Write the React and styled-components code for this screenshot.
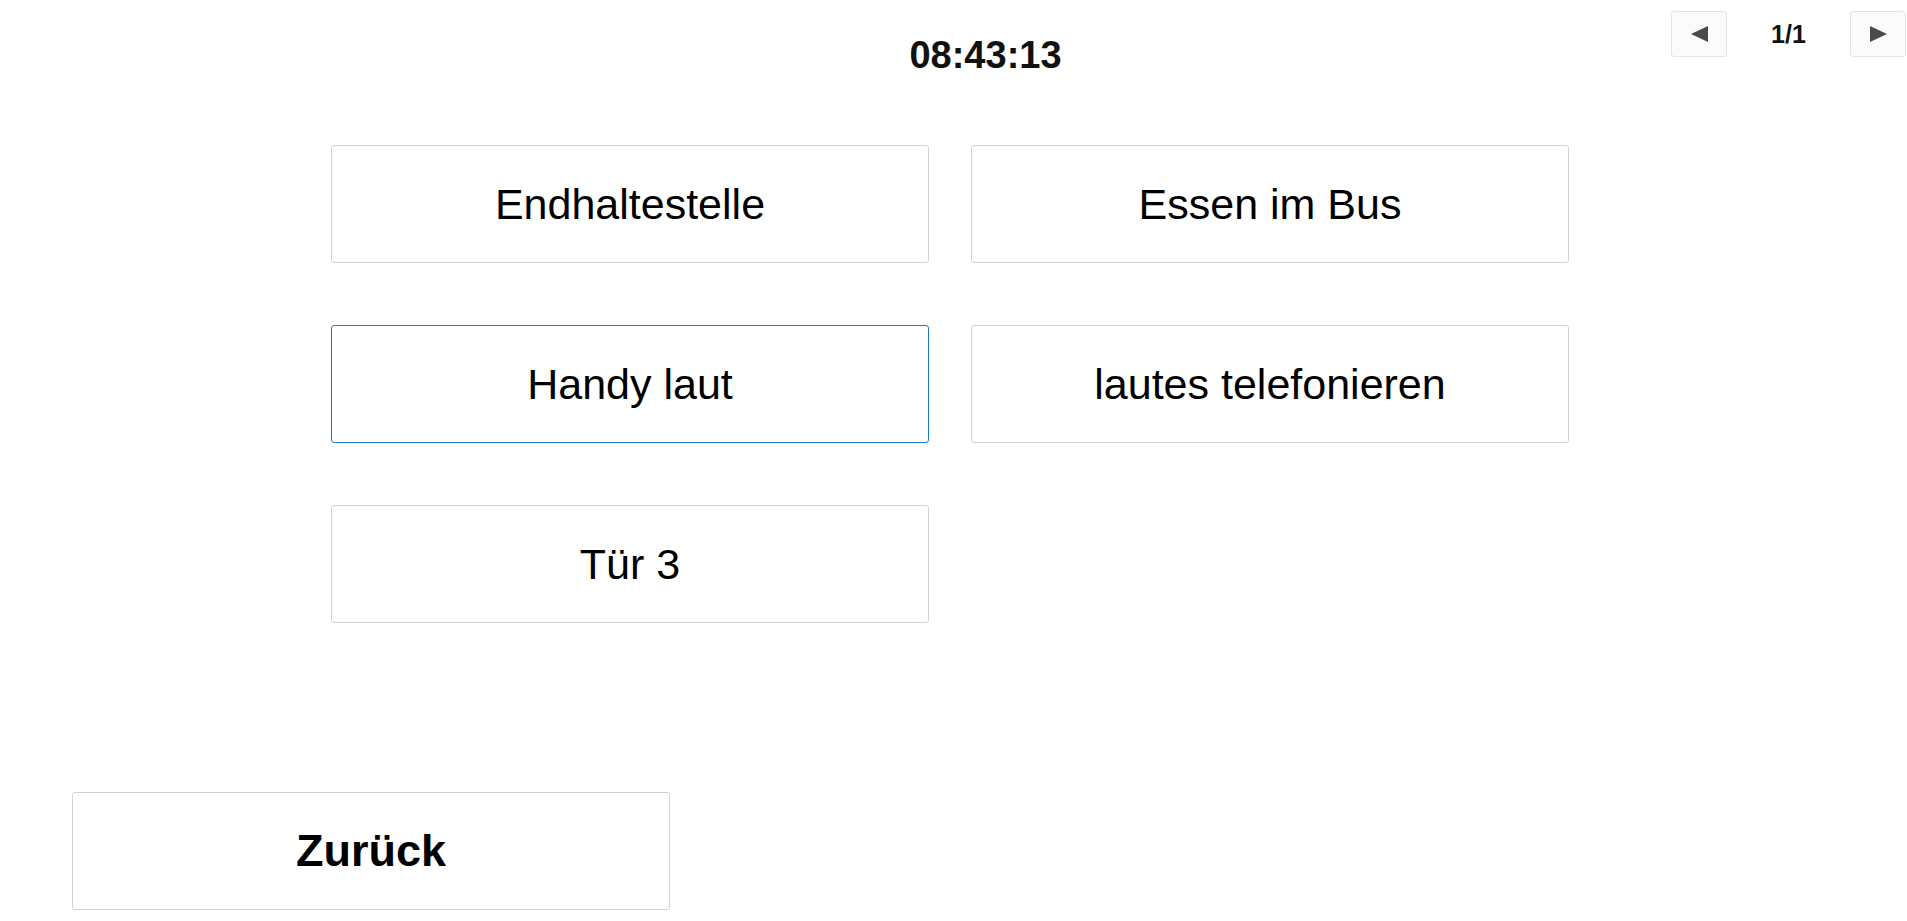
import React from "react";
import styled, { createGlobalStyle } from "styled-components";

const items = [
  { label: "Endhaltestelle" },
  { label: "Essen im Bus" },
  { label: "Handy laut", active: true },
  { label: "lautes telefonieren" },
  { label: "Tür 3" },
];

export default function App() {
  return (
    <Page>
      <GlobalStyle />
      <Header>
        <span />
        <Clock>08:43:13</Clock>
        <Pager>
          <PageButton aria-label="zurück">
            <Arrow $dir="left" />
          </PageButton>
          <PageLabel>1/1</PageLabel>
          <PageButton aria-label="weiter">
            <Arrow $dir="right" />
          </PageButton>
        </Pager>
      </Header>
      <Grid>
        {items.map((item) => (
          <Tile key={item.label} $active={item.active}>
            {item.label}
          </Tile>
        ))}
      </Grid>
      <Footer>
        <BackButton>Zurück</BackButton>
      </Footer>
    </Page>
  );
}

const GlobalStyle = createGlobalStyle`
  body {
    margin: 0;
    background: #ffffff;
    font-family: "Liberation Sans", Arial, sans-serif;
    color: #000;
  }
`;

const Page = styled.div`
  width: 1907px;
  height: 921px;
  overflow: hidden;
`;

const Header = styled.div`
  display: grid;
  grid-template-columns: 1fr auto 1fr;
  align-items: start;
  height: 145px;
  padding-top: 11px;
  box-sizing: border-box;
`;

const Clock = styled.div`
  margin-top: 25px;
  padding-left: 64px;
  font-size: 38px;
  font-weight: bold;
  line-height: 38px;
  color: #111;
`;

const Pager = styled.div`
  justify-self: end;
  display: flex;
  align-items: center;
  margin-right: 1px;
`;

const PageButton = styled.button`
  display: flex;
  align-items: center;
  justify-content: center;
  width: 56px;
  height: 46px;
  padding: 0;
  background: #fbfbfb;
  border: 1px solid #e4e4e4;
  border-radius: 3px;
`;

const Arrow = styled.span`
  width: 0;
  height: 0;
  border-top: 8px solid transparent;
  border-bottom: 8px solid transparent;
  ${({ $dir }) =>
    $dir === "left"
      ? "border-right: 17px solid #4a4a4a;"
      : "border-left: 17px solid #4a4a4a;"}
`;

const PageLabel = styled.span`
  width: 123px;
  text-align: center;
  font-size: 25px;
  font-weight: bold;
  color: #111;
`;

const Grid = styled.div`
  display: grid;
  grid-template-columns: repeat(2, 598px);
  grid-auto-rows: 118px;
  column-gap: 42px;
  row-gap: 62px;
  margin-left: 331px;
`;

const Tile = styled.button`
  display: flex;
  align-items: center;
  justify-content: center;
  background: #fff;
  border: 1px solid ${({ $active }) => ($active ? "#1f7bc6" : "#d2d2d2")};
  border-radius: 3px;
  font-family: "Liberation Sans", Arial, sans-serif;
  font-size: 43px;
  color: #000;
  padding: 0;
`;

const Footer = styled.div`
  padding: 169px 0 0 72px;
`;

const BackButton = styled.button`
  width: 598px;
  height: 118px;
  background: #fff;
  border: 1px solid #d2d2d2;
  border-radius: 3px;
  font-family: "Liberation Sans", Arial, sans-serif;
  font-size: 45px;
  font-weight: bold;
  color: #000;
`;
